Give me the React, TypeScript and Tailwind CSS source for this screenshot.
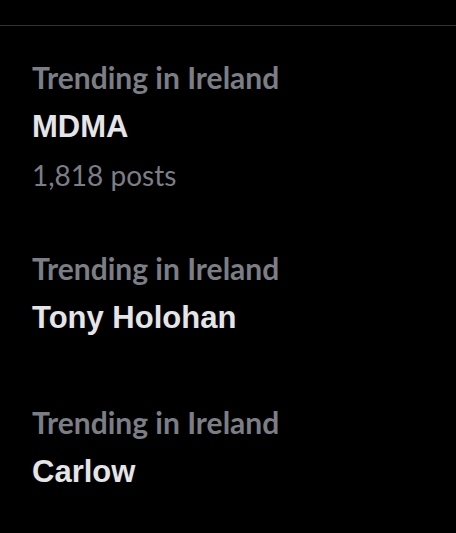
const trends = [
  { label: "Trending in Ireland", name: "MDMA", posts: "1,818 posts", gap: "pb-[44px]" },
  { label: "Trending in Ireland", name: "Tony Holohan", posts: "", gap: "pb-[56px]" },
  { label: "Trending in Ireland", name: "Carlow", posts: "", gap: "pb-0" },
];

export default function App() {
  return (
    <div className="h-[533px] w-[456px] overflow-hidden bg-black font-['Lato',sans-serif]">
      <div className="h-[25px]" />
      <div className="border-t border-[#2f3336] px-8 pt-[27px]">
        {trends.map((t) => (
          <div key={t.name} className={t.gap}>
            <div className="text-[30px] font-bold leading-[49px] text-[#7b7e84]">{t.label}</div>
            <div className="font-['Liberation_Sans',sans-serif] text-[31px] font-bold leading-[49px] text-[#e4e5e6]">
              {t.name}
            </div>
            {t.posts && (
              <div className="text-[28px] leading-[49px] text-[#7b7e84]">{t.posts}</div>
            )}
          </div>
        ))}
      </div>
    </div>
  );
}
